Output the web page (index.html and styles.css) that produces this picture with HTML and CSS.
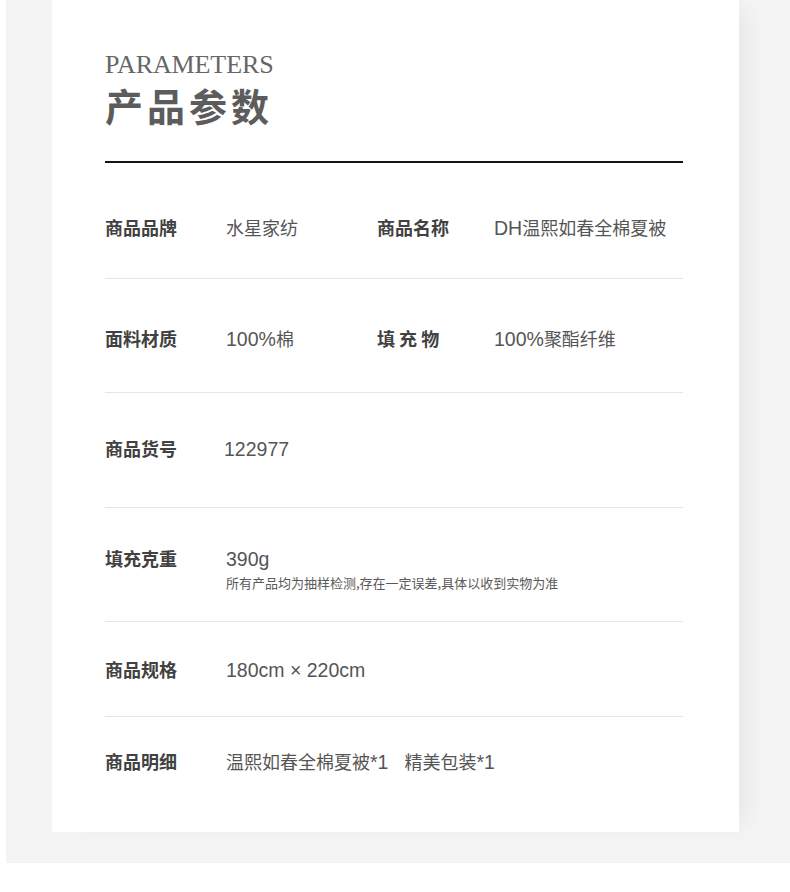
FILE: index.html
```html
<!DOCTYPE html>
<html lang="zh-CN">
<head>
<meta charset="utf-8">
<title>产品参数</title>
<link rel="stylesheet" href="styles.css">
</head>
<body>
<div class="page">
  <div class="card">
    <div class="head">
      <div class="head-en">PARAMETERS</div>
      <div class="head-cn">产品参数</div>
    </div>
    <div class="row r1">
      <div class="label">商品品牌</div>
      <div class="value">水星家纺</div>
      <div class="label">商品名称</div>
      <div class="value"><span class="num">DH</span>温熙如春全棉夏被</div>
    </div>
    <div class="row r2">
      <div class="label">面料材质</div>
      <div class="value"><span class="num">100%</span>棉</div>
      <div class="label">填 充 物</div>
      <div class="value"><span class="num">100%</span>聚酯纤维</div>
    </div>
    <div class="row r3">
      <div class="label">商品货号</div>
      <div class="value shift"><span class="num">122977</span></div>
    </div>
    <div class="row r4">
      <div class="label">填充克重</div>
      <div class="value wide"><span class="num">390g</span>
        <div class="note">所有产品均为抽样检测,存在一定误差,具体以收到实物为准</div>
      </div>
    </div>
    <div class="row r5">
      <div class="label">商品规格</div>
      <div class="value wide"><span class="num">180cm × 220cm</span></div>
    </div>
    <div class="row r6">
      <div class="label">商品明细</div>
      <div class="value wide">温熙如春全棉夏被<span class="num">*1</span><span class="gap">精美包装</span><span class="num">*1</span></div>
    </div>
  </div>
</div>
</body>
</html>
```
FILE: styles.css
```css
html, body {
  margin: 0;
  padding: 0;
  background: #ffffff;
}
body {
  width: 790px;
  height: 892px;
  overflow: hidden;
}
.page {
  margin-left: 6px;
  width: 738px;
  height: 863px;
  padding-left: 46px;
  background: #f4f4f4;
}
.card {
  width: 578px;
  height: 832px;
  padding: 0 56px 0 53px;
  background: #ffffff;
  box-shadow: 16px 0 22px -8px rgba(0, 0, 0, 0.055);
  font-family: "Noto Sans CJK SC", "Noto Sans", sans-serif;
}
.head {
  padding-top: 50px;
  padding-bottom: 32px;
  border-bottom: 2px solid #141414;
}
.head-en {
  font-family: "Liberation Serif", "DejaVu Serif", serif;
  font-size: 26px;
  line-height: 30px;
  color: #666666;
  letter-spacing: -0.1px;
}
.head-cn {
  margin-top: 1px;
  font-size: 38px;
  line-height: 48px;
  font-weight: 700;
  color: #5c5c5c;
  letter-spacing: 4px;
}
.row {
  display: grid;
  grid-template-columns: 121px 151px 117px 1fr;
  border-bottom: 1px solid #e6e6e6;
  font-size: 18px;
  line-height: 24px;
}
.label {
  font-weight: 700;
  color: #414141;
}
.value {
  color: #555555;
}
.num {
  font-family: "Liberation Sans", "Noto Sans", sans-serif;
  font-size: 19.5px;
  line-height: 16px;
}
.value.shift {
  margin-left: -2px;
}
.value.wide {
  grid-column: 2 / 5;
}
.note {
  margin-top: 4px;
  font-size: 13px;
  line-height: 18px;
  color: #5a5a5a;
}
.gap {
  margin-left: 16px;
}
.r1 { padding-top: 52px; padding-bottom: 39px; }
.r2 { padding-top: 47px; padding-bottom: 42px; }
.r3 { padding-top: 43px; padding-bottom: 47px; }
.r4 { padding-top: 38px; padding-bottom: 29px; }
.r5 { padding-top: 35px; padding-bottom: 35px; }
.r6 { padding-top: 32px; padding-bottom: 59px; border-bottom: none; }
```
